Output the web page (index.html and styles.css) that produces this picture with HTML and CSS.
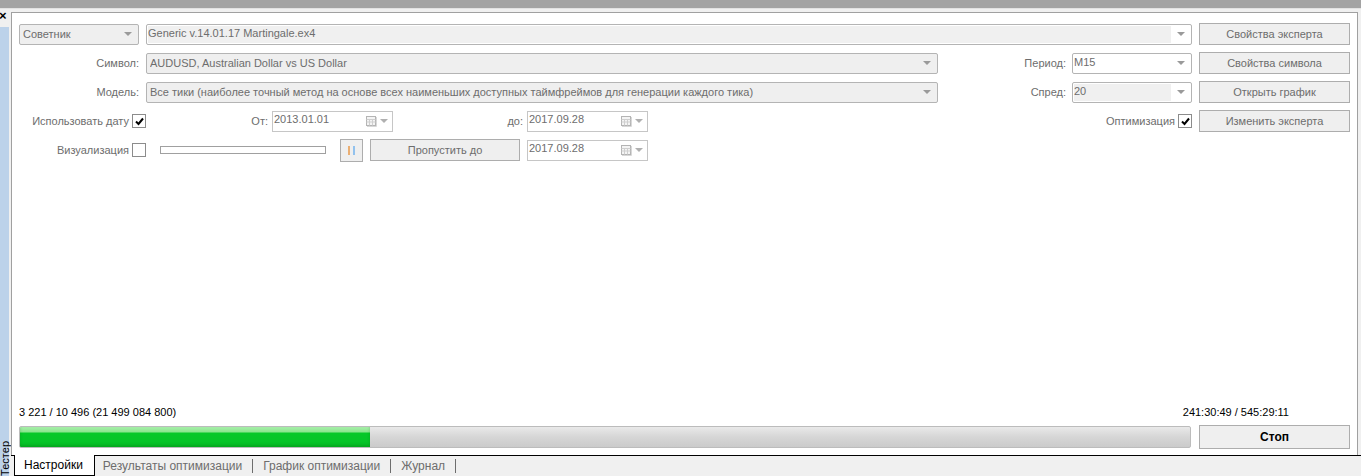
FILE: index.html
```html
<!DOCTYPE html>
<html>
<head>
    <meta charset="UTF-8">
    <title>Тестер</title>
    <link rel="stylesheet" href="styles.css">
</head>
<body>
    <div class="window">
        <div class="title-bar"></div>
        <div class="frame">
            <div class="side-bar">
                <span class="close">×</span>
                <div class="side-tab"><span class="side-label">Тестер</span></div>
            </div>

            <div class="main">
                <div class="panel">
                    <div class="form">
                        <div class="row">
                            <div class="select col-label"><span>Советник</span><i class="arrow"></i></div>
                            <div class="combo grow"><span class="field">Generic v.14.01.17 Martingale.ex4</span><i class="arrow"></i></div>
                            <button class="btn">Свойства эксперта</button>
                        </div>

                        <div class="row">
                            <span class="label col-label">Символ:</span>
                            <div class="select select-long"><span>AUDUSD, Australian Dollar vs US Dollar</span><i class="arrow"></i></div>
                            <span class="label grow label-side">Период:</span>
                            <div class="combo combo-short"><span class="field plain">M15</span><i class="arrow"></i></div>
                            <button class="btn">Свойства символа</button>
                        </div>

                        <div class="row">
                            <span class="label col-label">Модель:</span>
                            <div class="select select-long"><span>Все тики (наиболее точный метод на основе всех наименьших доступных таймфреймов для генерации каждого тика)</span><i class="arrow"></i></div>
                            <span class="label grow label-side">Спред:</span>
                            <div class="combo combo-short"><span class="field">20</span><i class="arrow"></i></div>
                            <button class="btn">Открыть график</button>
                        </div>

                        <div class="row">
                            <div class="check-cell">
                                <span class="label">Использовать дату</span>
                                <span class="checkbox checked"><svg width="11" height="11" viewBox="0 0 11 11"><path d="M2 5.5 L4.5 8 L9 2.5" fill="none" stroke="#000" stroke-width="2"/></svg></span>
                            </div>
                            <span class="label date-label from">От:</span>
                            <div class="date">
                                <span class="date-value">2013.01.01</span>
                                <svg class="cal" width="11" height="11" viewBox="0 0 11 11"><rect x="0.5" y="0.5" width="9" height="9" fill="#f4f4f4" stroke="#b4b4b4"/><path d="M0.5 3.5 H9.5 M0.5 6 H9.5 M3.5 3.5 V9.5 M6.5 3.5 V9.5" stroke="#cfcfcf"/><path d="M1 10.5 H10.5 V1" stroke="#d8d8d8" fill="none"/></svg>
                                <i class="arrow"></i>
                            </div>
                            <span class="label date-label to">до:</span>
                            <div class="date">
                                <span class="date-value">2017.09.28</span>
                                <svg class="cal" width="11" height="11" viewBox="0 0 11 11"><rect x="0.5" y="0.5" width="9" height="9" fill="#f4f4f4" stroke="#b4b4b4"/><path d="M0.5 3.5 H9.5 M0.5 6 H9.5 M3.5 3.5 V9.5 M6.5 3.5 V9.5" stroke="#cfcfcf"/><path d="M1 10.5 H10.5 V1" stroke="#d8d8d8" fill="none"/></svg>
                                <i class="arrow"></i>
                            </div>
                            <div class="check-cell grow">
                                <span class="label">Оптимизация</span>
                                <span class="checkbox checked"><svg width="11" height="11" viewBox="0 0 11 11"><path d="M2 5.5 L4.5 8 L9 2.5" fill="none" stroke="#000" stroke-width="2"/></svg></span>
                            </div>
                            <button class="btn">Изменить эксперта</button>
                        </div>

                        <div class="row">
                            <div class="check-cell">
                                <span class="label">Визуализация</span>
                                <span class="checkbox"></span>
                            </div>
                            <div class="track"></div>
                            <button class="btn-pause"><span class="bar-a"></span><span class="bar-b"></span></button>
                            <button class="btn btn-skip">Пропустить до</button>
                            <div class="date">
                                <span class="date-value">2017.09.28</span>
                                <svg class="cal" width="11" height="11" viewBox="0 0 11 11"><rect x="0.5" y="0.5" width="9" height="9" fill="#f4f4f4" stroke="#b4b4b4"/><path d="M0.5 3.5 H9.5 M0.5 6 H9.5 M3.5 3.5 V9.5 M6.5 3.5 V9.5" stroke="#cfcfcf"/><path d="M1 10.5 H10.5 V1" stroke="#d8d8d8" fill="none"/></svg>
                                <i class="arrow"></i>
                            </div>
                        </div>
                    </div>

                    <div class="status">
                        <div class="status-text">
                            <span>3 221 / 10 496 (21 499 084 800)</span>
                            <span class="elapsed">241:30:49 / 545:29:11</span>
                        </div>
                        <div class="progress-row">
                            <div class="progress"><div class="progress-fill" style="width: 29.9%"></div></div>
                            <button class="btn btn-stop">Стоп</button>
                        </div>
                    </div>
                </div>

                <div class="tabs">
                    <span class="tab active">Настройки</span>
                    <span class="tab">Результаты оптимизации</span>
                    <span class="tab">График оптимизации</span>
                    <span class="tab">Журнал</span>
                </div>
            </div>
        </div>
    </div>
</body>
</html>
```

FILE: styles.css
```css
html, body {
    margin: 0;
    padding: 0;
}
body {
    width: 1361px;
    height: 476px;
    overflow: hidden;
    background: #f0f0f0;
    font-family: 'Liberation Sans', Arial, sans-serif;
    font-size: 11px;
    color: #6d6d6d;
}
.window {
    display: flex;
    flex-direction: column;
    height: 476px;
}
.title-bar {
    height: 8px;
    background: #a3a3a3;
    border-bottom: 1px solid #e2e2e2;
}
.frame {
    flex: 1;
    display: flex;
    min-height: 0;
}

/* left dock strip */
.side-bar {
    width: 11px;
    display: flex;
    flex-direction: column;
}
.close {
    height: 18px;
    line-height: 14px;
    font-size: 13px;
    font-weight: bold;
    color: #000;
    margin-left: -1px;
}
.side-tab {
    flex: 1;
    width: 9px;
    background: #bcd2ea;
    display: flex;
    flex-direction: column;
    justify-content: flex-end;
    align-items: center;
}
.side-label {
    writing-mode: vertical-rl;
    transform: rotate(180deg);
    font-size: 11px;
    color: #000;
    line-height: 10px;
}

/* main area */
.main {
    flex: 1;
    display: flex;
    flex-direction: column;
    margin-top: 3px;
}
.panel {
    flex: 1;
    display: flex;
    flex-direction: column;
    justify-content: space-between;
    background: #fff;
    border: 1px solid #a0a0a0;
    border-bottom: none;
    margin-right: 3px;
    padding: 10px 7px 6px 7px;
}
.form {
    display: flex;
    flex-direction: column;
    gap: 7px;
}
.row {
    display: flex;
    align-items: center;
    height: 22px;
}
.grow {
    flex: 1;
}
.label {
    white-space: nowrap;
}
.col-label {
    width: 120px;
    flex: none;
    text-align: right;
    margin-right: 7px;
}
.label-side {
    text-align: right;
    margin-right: 6px;
}

/* drop-down lists */
.select {
    height: 19px;
    border: 1px solid #b4b4b4;
    border-radius: 2px;
    background: #efefef;
    display: flex;
    align-items: center;
    padding-left: 3px;
    overflow: hidden;
    white-space: nowrap;
}
.select.col-label {
    width: 115px;
    text-align: left;
}
.select span {
    flex: 1;
    overflow: hidden;
}
.select-long {
    width: 787px;
    flex: none;
}
.combo {
    height: 19px;
    border: 1px solid #b4b4b4;
    border-radius: 2px;
    background: #fff;
    display: flex;
    align-items: center;
    padding: 0 0 0 1px;
    margin-right: 7px;
}
.combo-short {
    width: 117px;
    flex: none;
}
.combo .field {
    flex: 1;
    height: 17px;
    line-height: 15px;
    background: #f0f0f0;
    white-space: nowrap;
}
.combo .field.plain {
    background: #fff;
}
.arrow {
    width: 0;
    height: 0;
    border-left: 4px solid transparent;
    border-right: 4px solid transparent;
    border-top: 4px solid #9a9a9a;
    margin: 0 6px 0 6px;
    flex: none;
}

/* buttons */
.btn {
    width: 151px;
    height: 22px;
    flex: none;
    border: 1px solid #adadad;
    background: #efefef;
    color: #6d6d6d;
    font-family: inherit;
    font-size: 11px;
    padding: 0;
    margin: 0;
}
.btn-skip {
    width: 150px;
    margin-right: 7px;
}
.btn-stop {
    height: 24px;
    color: #000;
    font-weight: bold;
    font-size: 12px;
}
.btn-pause {
    width: 23px;
    height: 23px;
    flex: none;
    border: 1px solid #adadad;
    background: #efefef;
    padding: 0;
    margin: 0 7px 0 14px;
    display: flex;
    justify-content: center;
    align-items: center;
    gap: 3px;
}
.bar-a, .bar-b {
    width: 2px;
    height: 9px;
}
.bar-a {
    background: #eaae72;
}
.bar-b {
    background: #92c2ee;
}

/* checkbox fields */
.check-cell {
    width: 127px;
    flex: none;
    display: flex;
    justify-content: flex-end;
    align-items: center;
    gap: 3px;
}
.check-cell.grow {
    flex: 1;
    width: auto;
    margin-right: 7px;
}
.checkbox {
    width: 12px;
    height: 12px;
    border: 1px solid #8c8c8c;
    background: #fff;
    display: flex;
    align-items: center;
    justify-content: center;
}

/* date pickers */
.date-label {
    text-align: right;
    margin-right: 4px;
    flex: none;
}
.date-label.from {
    width: 122px;
}
.date-label.to {
    width: 130px;
}
.date {
    width: 118px;
    height: 19px;
    flex: none;
    border: 1px solid #c6c6c6;
    background: #fff;
    display: flex;
    align-items: center;
    padding-left: 1px;
}
.date-value {
    flex: 1;
    line-height: 15px;
    align-self: flex-start;
}
.date .cal {
    flex: none;
}
.date .arrow {
    border-top-color: #b0b0b0;
    margin: 0 4px 0 3px;
}

/* playback speed */
.track {
    width: 164px;
    height: 6px;
    flex: none;
    border: 1px solid #a0a0a0;
    background: #fff;
    margin-left: 14px;
}

/* progress */
.status {
    display: flex;
    flex-direction: column;
    gap: 6px;
}
.status-text {
    display: flex;
    justify-content: space-between;
    color: #000;
    line-height: 14px;
}
.elapsed {
    margin-right: 61px;
}
.progress-row {
    display: flex;
    align-items: center;
    gap: 8px;
    height: 24px;
}
.progress {
    flex: 1;
    height: 20px;
    border: 1px solid #bcbcbc;
    border-radius: 2px;
    background: linear-gradient(#e9e9e9, #d6d6d6 50%, #cbcbcb);
    overflow: hidden;
}
.progress-fill {
    height: 100%;
    background: linear-gradient(#a8efaa 0, #8ae58d 25%, #06c828 30%, #06c328 100%);
    box-shadow: inset 0 -2px 3px rgba(0, 80, 0, 0.25);
}

/* bottom tabs */
.tabs {
    height: 20px;
    display: flex;
    align-items: stretch;
    border-top: 1px solid #000;
    padding-left: 3px;
    font-size: 12px;
}
.tab {
    padding: 0 11px 0 10px;
    line-height: 20px;
    color: #6d6d6d;
    position: relative;
}
.tab + .tab::after {
    content: "";
    position: absolute;
    right: 0;
    top: 3px;
    height: 14px;
    border-right: 1px solid #6d6d6d;
}
.tab.active {
    margin-top: -1px;
    height: 20px;
    background: #fff;
    color: #000;
    border: 1px solid #000;
    border-top: none;
    padding: 0 11px 0 9px;
    line-height: 21px;
}
.tab.active + .tab {
    padding-left: 8px;
}
```
